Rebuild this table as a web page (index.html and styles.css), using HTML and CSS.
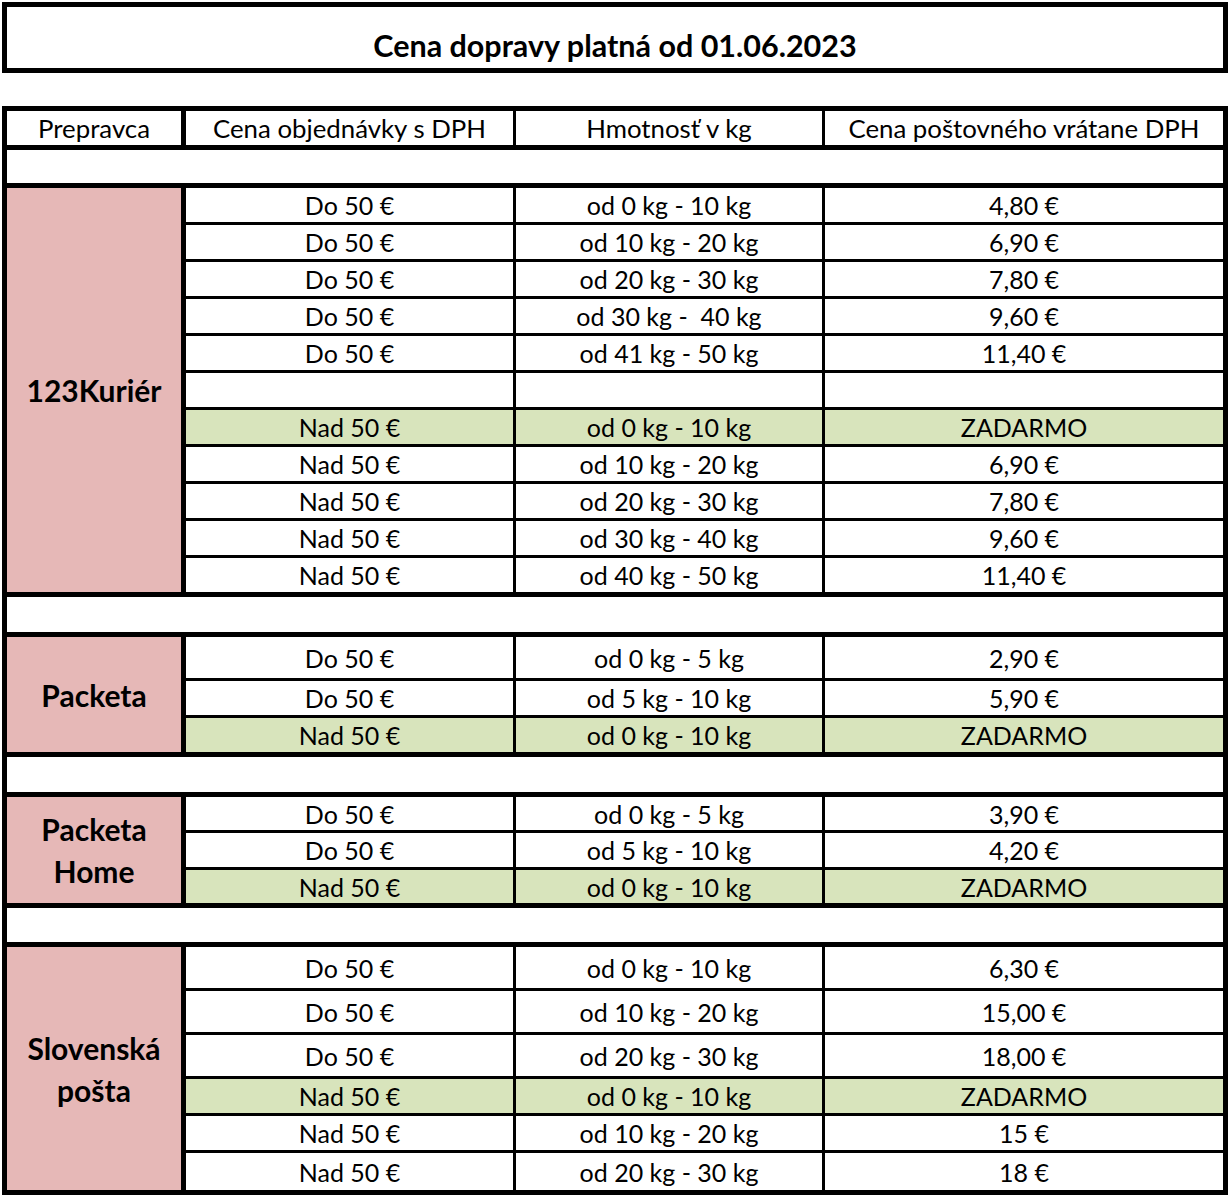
FILE: index.html
```html
<!DOCTYPE html>
<html lang="sk">
<head>
<meta charset="utf-8">
<title>Cena dopravy</title>
<link rel="stylesheet" href="styles.css">
</head>
<body>
<div class="page">
  <div class="title"><span>Cena dopravy platná od 01.06.2023</span></div>

  <div class="table">
    <div class="grid head">
      <div class="cell">Prepravca</div>
      <div class="cell">Cena objednávky s DPH</div>
      <div class="cell">Hmotnosť v kg</div>
      <div class="cell">Cena poštovného vrátane DPH</div>
    </div>

    <div class="blank b1"></div>

    <div class="grid block k123">
      <div class="carrier">123Kuriér</div>
      <div class="cell">Do 50 €</div><div class="cell">od 0 kg - 10 kg</div><div class="cell">4,80 €</div>
      <div class="cell">Do 50 €</div><div class="cell">od 10 kg - 20 kg</div><div class="cell">6,90 €</div>
      <div class="cell">Do 50 €</div><div class="cell">od 20 kg - 30 kg</div><div class="cell">7,80 €</div>
      <div class="cell">Do 50 €</div><div class="cell">od 30 kg -&nbsp; 40 kg</div><div class="cell">9,60 €</div>
      <div class="cell">Do 50 €</div><div class="cell">od 41 kg - 50 kg</div><div class="cell">11,40 €</div>
      <div class="cell"></div><div class="cell"></div><div class="cell"></div>
      <div class="cell free">Nad 50 €</div><div class="cell free">od 0 kg - 10 kg</div><div class="cell free">ZADARMO</div>
      <div class="cell">Nad 50 €</div><div class="cell">od 10 kg - 20 kg</div><div class="cell">6,90 €</div>
      <div class="cell">Nad 50 €</div><div class="cell">od 20 kg - 30 kg</div><div class="cell">7,80 €</div>
      <div class="cell">Nad 50 €</div><div class="cell">od 30 kg - 40 kg</div><div class="cell">9,60 €</div>
      <div class="cell">Nad 50 €</div><div class="cell">od 40 kg - 50 kg</div><div class="cell">11,40 €</div>
    </div>

    <div class="blank b2"></div>

    <div class="grid block packeta">
      <div class="carrier">Packeta</div>
      <div class="cell">Do 50 €</div><div class="cell">od 0 kg - 5 kg</div><div class="cell">2,90 €</div>
      <div class="cell">Do 50 €</div><div class="cell">od 5 kg - 10 kg</div><div class="cell">5,90 €</div>
      <div class="cell free">Nad 50 €</div><div class="cell free">od 0 kg - 10 kg</div><div class="cell free">ZADARMO</div>
    </div>

    <div class="blank b2"></div>

    <div class="grid block home">
      <div class="carrier">Packeta<br>Home</div>
      <div class="cell">Do 50 €</div><div class="cell">od 0 kg - 5 kg</div><div class="cell">3,90 €</div>
      <div class="cell">Do 50 €</div><div class="cell">od 5 kg - 10 kg</div><div class="cell">4,20 €</div>
      <div class="cell free">Nad 50 €</div><div class="cell free">od 0 kg - 10 kg</div><div class="cell free">ZADARMO</div>
    </div>

    <div class="blank b3"></div>

    <div class="grid block posta">
      <div class="carrier">Slovenská<br>pošta</div>
      <div class="cell">Do 50 €</div><div class="cell">od 0 kg - 10 kg</div><div class="cell">6,30 €</div>
      <div class="cell">Do 50 €</div><div class="cell">od 10 kg - 20 kg</div><div class="cell">15,00 €</div>
      <div class="cell">Do 50 €</div><div class="cell">od 20 kg - 30 kg</div><div class="cell">18,00 €</div>
      <div class="cell free">Nad 50 €</div><div class="cell free">od 0 kg - 10 kg</div><div class="cell free">ZADARMO</div>
      <div class="cell">Nad 50 €</div><div class="cell">od 10 kg - 20 kg</div><div class="cell">15 €</div>
      <div class="cell">Nad 50 €</div><div class="cell">od 20 kg - 30 kg</div><div class="cell">18 €</div>
    </div>
  </div>
</div>
</body>
</html>
```

FILE: styles.css
```css
* {
  box-sizing: border-box;
}

html, body {
  margin: 0;
  padding: 0;
  background: #ffffff;
}

body {
  font-family: Lato, "Liberation Sans", sans-serif;
  font-size: 25px;
  color: #000000;
}

.page {
  width: 1231px;
  padding: 2px 3px 0 2px;
}

.title {
  height: 71px;
  border: 5px solid #000000;
  display: flex;
  align-items: flex-end;
  justify-content: center;
  padding-bottom: 7px;
  font-size: 30.5px;
  font-weight: 700;
  line-height: 32px;
}

.table {
  margin-top: 33px;
  border: 5px solid #000000;
  background: #000000;
  display: flex;
  flex-direction: column;
  gap: 5px;
}

.grid {
  display: grid;
  grid-template-columns: 176px 327px 306px 398px;
  column-gap: 3px;
  row-gap: 3px;
  background: #000000;
}

.head {
  grid-template-rows: 34px;
  font-size: 25.8px;
}

.head .cell:first-child {
  border-right: 2px solid #000000;
}

.cell {
  background: #ffffff;
  display: flex;
  align-items: center;
  justify-content: center;
  white-space: nowrap;
  line-height: 30px;
}

.cell.free {
  background: #d8e4bc;
}

.carrier {
  grid-row: 1 / -1;
  background: #e6b8b7;
  border-right: 2px solid #000000;
  display: flex;
  align-items: center;
  justify-content: center;
  text-align: center;
  font-size: 30px;
  font-weight: 700;
  line-height: 42px;
}

.blank {
  background: #ffffff;
}

.b1 { height: 33px; }
.b2 { height: 35px; }
.b3 { height: 34px; }

.k123 {
  grid-template-rows: repeat(11, 34px);
}

.packeta {
  grid-template-rows: 41px 34px 34px;
}

.home {
  grid-template-rows: 33px 34px 33px;
}

.posta {
  grid-template-rows: 41px 41px 41px 34px 34px 37px;
}
```
